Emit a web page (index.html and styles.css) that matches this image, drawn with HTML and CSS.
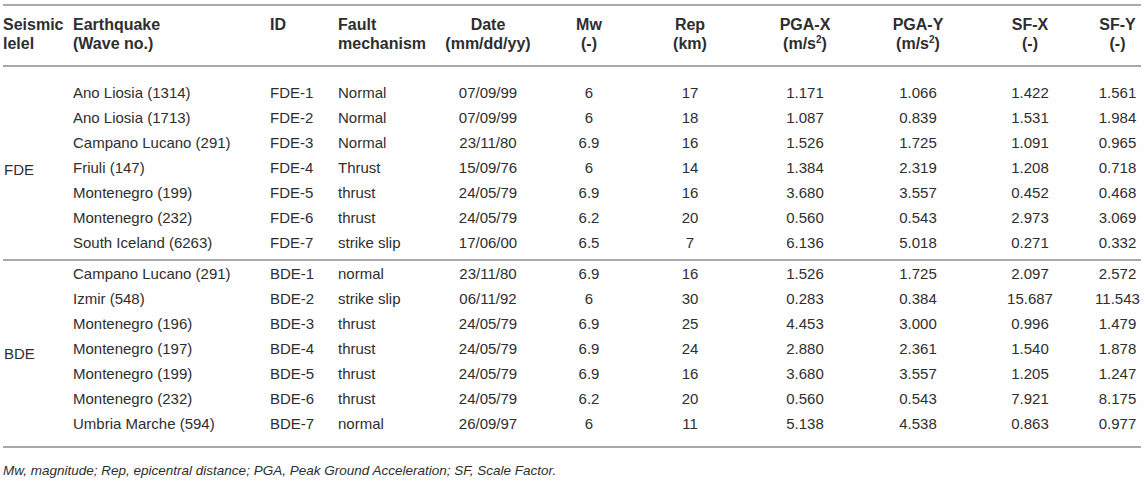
FILE: index.html
```html
<!doctype html>
<html>
<head>
  <link rel="stylesheet" href="styles.css">
</head>
<body>
<table class="b-quakes">
  <colgroup>
    <col class="c-level">
    <col class="c-name">
    <col class="c-id">
    <col class="c-fault">
    <col class="c-date">
    <col class="c-mw">
    <col class="c-rep">
    <col class="c-pgax">
    <col class="c-pgay">
    <col class="c-sfx">
    <col class="c-sfy">
  </colgroup>
  <thead>
    <tr>
      <th class="left">Seismic<br>lelel</th>
      <th class="left">Earthquake<br>(Wave no.)</th>
      <th class="left">ID<br>&nbsp;</th>
      <th class="left">Fault<br>mechanism</th>
      <th>Date<br>(mm/dd/yy)</th>
      <th>Mw<br>(-)</th>
      <th>Rep<br>(km)</th>
      <th>PGA-X<br>(m/s<sup>2</sup>)</th>
      <th>PGA-Y<br>(m/s<sup>2</sup>)</th>
      <th>SF-X<br>(-)</th>
      <th>SF-Y<br>(-)</th>
    </tr>
  </thead>
  <tbody>
    <tr class="first">
      <td class="left level" rowspan="7">FDE</td>
      <td class="left">Ano Liosia (1314)</td><td class="left">FDE-1</td><td class="left">Normal</td>
      <td>07/09/99</td><td>6</td><td>17</td><td>1.171</td><td>1.066</td><td>1.422</td><td>1.561</td>
    </tr>
    <tr>
      <td class="left">Ano Liosia (1713)</td><td class="left">FDE-2</td><td class="left">Normal</td>
      <td>07/09/99</td><td>6</td><td>18</td><td>1.087</td><td>0.839</td><td>1.531</td><td>1.984</td>
    </tr>
    <tr>
      <td class="left">Campano Lucano (291)</td><td class="left">FDE-3</td><td class="left">Normal</td>
      <td>23/11/80</td><td>6.9</td><td>16</td><td>1.526</td><td>1.725</td><td>1.091</td><td>0.965</td>
    </tr>
    <tr>
      <td class="left">Friuli (147)</td><td class="left">FDE-4</td><td class="left">Thrust</td>
      <td>15/09/76</td><td>6</td><td>14</td><td>1.384</td><td>2.319</td><td>1.208</td><td>0.718</td>
    </tr>
    <tr>
      <td class="left">Montenegro (199)</td><td class="left">FDE-5</td><td class="left">thrust</td>
      <td>24/05/79</td><td>6.9</td><td>16</td><td>3.680</td><td>3.557</td><td>0.452</td><td>0.468</td>
    </tr>
    <tr>
      <td class="left">Montenegro (232)</td><td class="left">FDE-6</td><td class="left">thrust</td>
      <td>24/05/79</td><td>6.2</td><td>20</td><td>0.560</td><td>0.543</td><td>2.973</td><td>3.069</td>
    </tr>
    <tr class="group-end">
      <td class="left">South Iceland (6263)</td><td class="left">FDE-7</td><td class="left">strike slip</td>
      <td>17/06/00</td><td>6.5</td><td>7</td><td>6.136</td><td>5.018</td><td>0.271</td><td>0.332</td>
    </tr>
    <tr>
      <td class="left level" rowspan="7">BDE</td>
      <td class="left">Campano Lucano (291)</td><td class="left">BDE-1</td><td class="left">normal</td>
      <td>23/11/80</td><td>6.9</td><td>16</td><td>1.526</td><td>1.725</td><td>2.097</td><td>2.572</td>
    </tr>
    <tr>
      <td class="left">Izmir (548)</td><td class="left">BDE-2</td><td class="left">strike slip</td>
      <td>06/11/92</td><td>6</td><td>30</td><td>0.283</td><td>0.384</td><td>15.687</td><td>11.543</td>
    </tr>
    <tr>
      <td class="left">Montenegro (196)</td><td class="left">BDE-3</td><td class="left">thrust</td>
      <td>24/05/79</td><td>6.9</td><td>25</td><td>4.453</td><td>3.000</td><td>0.996</td><td>1.479</td>
    </tr>
    <tr>
      <td class="left">Montenegro (197)</td><td class="left">BDE-4</td><td class="left">thrust</td>
      <td>24/05/79</td><td>6.9</td><td>24</td><td>2.880</td><td>2.361</td><td>1.540</td><td>1.878</td>
    </tr>
    <tr>
      <td class="left">Montenegro (199)</td><td class="left">BDE-5</td><td class="left">thrust</td>
      <td>24/05/79</td><td>6.9</td><td>16</td><td>3.680</td><td>3.557</td><td>1.205</td><td>1.247</td>
    </tr>
    <tr>
      <td class="left">Montenegro (232)</td><td class="left">BDE-6</td><td class="left">thrust</td>
      <td>24/05/79</td><td>6.2</td><td>20</td><td>0.560</td><td>0.543</td><td>7.921</td><td>8.175</td>
    </tr>
    <tr class="last">
      <td class="left">Umbria Marche (594)</td><td class="left">BDE-7</td><td class="left">normal</td>
      <td>26/09/97</td><td>6</td><td>11</td><td>5.138</td><td>4.538</td><td>0.863</td><td>0.977</td>
    </tr>
  </tbody>
</table>
<p class="b-quakes_note">Mw, magnitude; Rep, epicentral distance; PGA, Peak Ground Acceleration; SF, Scale Factor.</p>
</body>
</html>
```
FILE: styles.css
```css
body {
  margin : 0;
  padding : 4px 3px 0;
  font-family : "Liberation Sans", Arial, sans-serif;
  font-size : 15px;
  color : #2e2e2e;
  background : #fff;
}
.b-quakes {
  border-collapse : collapse;
  width : 1138px;
  table-layout : fixed;
}
.c-level { width : 70px; }
.c-name  { width : 197px; }
.c-id    { width : 68px; }
.c-fault { width : 92px; }
.c-date  { width : 116px; }
.c-mw    { width : 86px; }
.c-rep   { width : 116px; }
.c-pgax  { width : 114px; }
.c-pgay  { width : 112px; }
.c-sfx   { width : 112px; }
.c-sfy   { width : 55px; }

.b-quakes th,
.b-quakes td {
  text-align : center;
  white-space : nowrap;
  padding : 4px 0 4px 0;
  line-height : 17px;
  font-weight : normal;
}
.b-quakes th {
  font-size : 16px;
  font-weight : bold;
  line-height : 19px;
  padding : 9px 0 12px 0;
  border-top : 2px solid #a9a9a9;
  border-bottom : 2px solid #a9a9a9;
  vertical-align : bottom;
}
.b-quakes th:last-child,
.b-quakes td:last-child {
  padding-left : 8px;
}
.b-quakes .left {
  text-align : left;
}
.b-quakes sup {
  font-size : 10px;
  line-height : 0;
  vertical-align : 6px;
}
.b-quakes .first td {
  padding-top : 17px;
}
.b-quakes .group-end td,
.b-quakes td.level:first-child {
  border-bottom : 2px solid #a9a9a9;
}
.b-quakes .group-end td {
  padding-bottom : 8px;
}
.b-quakes .last td {
  padding-bottom : 14px;
  border-bottom : 2px solid #a9a9a9;
}
.b-quakes td.level {
  vertical-align : middle;
  padding-left : 1px;
}
.b-quakes_note {
  margin : 14px 0 0;
  font-size : 13.5px;
  font-style : italic;
  line-height : 17px;
}
```
